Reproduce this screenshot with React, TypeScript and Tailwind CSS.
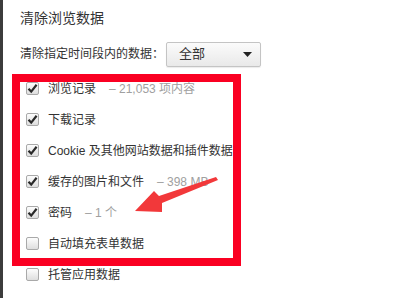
import React from "react";

type Item = { label: string; extra?: string; checked: boolean };

const items: Item[] = [
  { label: "浏览记录", extra: "– 21,053 项内容", checked: true },
  { label: "下载记录", checked: true },
  { label: "Cookie 及其他网站数据和插件数据", checked: true },
  { label: "缓存的图片和文件", extra: "– 398 MB", checked: true },
  { label: "密码", extra: "– 1 个", checked: true },
  { label: "自动填充表单数据", checked: false },
  { label: "托管应用数据", checked: false },
];

const Checkbox = ({ checked }: { checked: boolean }) => (
  <span className="w-[13px] h-[13px] shrink-0 rounded-[2px] border border-[#a9a9a9] bg-gradient-to-b from-[#fdfdfd] to-[#dedede] flex items-center justify-center">
    {checked && (
      <svg width="11" height="11" viewBox="0 0 11 11">
        <path d="M1.5 5.8 L4.2 8.6 L9.6 1.8" fill="none" stroke="#2a2a2a" strokeWidth="2.2" />
      </svg>
    )}
  </span>
);

const App = () => {
  return (
    <div
      className="relative w-[400px] h-[298px] overflow-hidden bg-white border-l-[3px] border-[#3c3c3c] text-[#333]"
      style={{ fontFamily: '"Liberation Sans", "Noto Sans CJK SC", sans-serif' }}
    >
      <div className="pl-[17px] pt-[7px] h-[24px] text-[14px] leading-[22px]">清除浏览数据</div>

      <div className="flex items-center pl-[17px] mt-[17px] h-[26px]">
        <span className="text-[12px]">清除指定时间段内的数据：</span>
        <div className="ml-[2px] w-[95px] h-[25px] rounded-[2px] border border-[#c4c4c4] bg-gradient-to-b from-[#fbfbfb] to-[#e9e9e9] flex items-center justify-between pl-[12px] pr-[8px] shadow-[0_1px_1px_rgba(0,0,0,0.08)]">
          <span className="text-[13px]">全部</span>
          <svg width="9" height="5" viewBox="0 0 9 5">
            <path d="M0 0 H9 L4.5 5 Z" fill="#222" />
          </svg>
        </div>
      </div>

      <ul className="mt-[6px] pl-[23px]">
        {items.map((it) => (
          <li key={it.label} className="h-[31px] flex items-center gap-[9px] text-[12px] whitespace-nowrap">
            <Checkbox checked={it.checked} />
            <span>{it.label}</span>
            {it.extra && <span className="text-[#a0a0a0] ml-[4px]">{it.extra}</span>}
          </li>
        ))}
      </ul>

      <div className="absolute left-[9px] top-[74px] w-[229px] h-[192px] border-[8px] border-[#fa0022]" />

      <svg className="absolute left-0 top-0" width="400" height="298" viewBox="0 0 400 298">
        <path d="M213 177 L156 196 L151 191 L132 211 L159 212 L159 203 L215 180 Z" fill="#f2383a" />
      </svg>
    </div>
  );
};

export default App;
